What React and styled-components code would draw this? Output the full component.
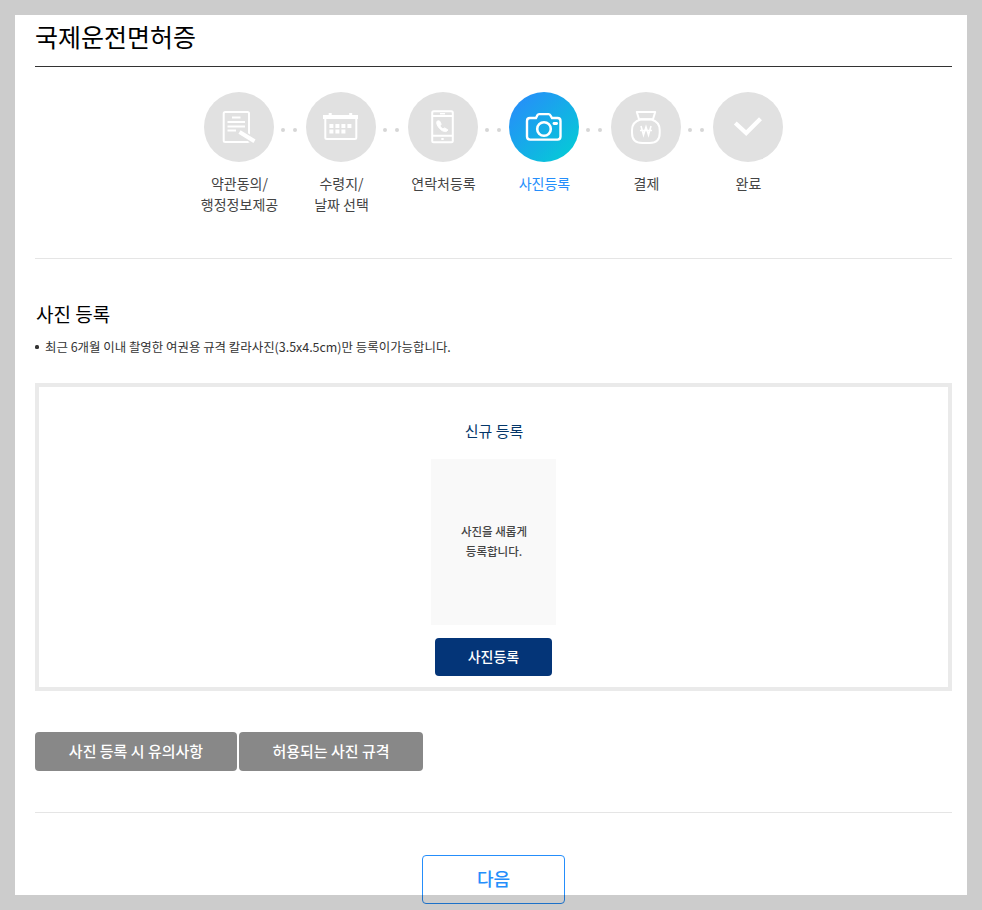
import React from "react";
import styled, { createGlobalStyle } from "styled-components";

const Global = createGlobalStyle`
  * { box-sizing: border-box; }
  html, body { margin: 0; padding: 0; background: #fff; height: 910px; overflow: hidden; }
  body, button { font-family: "Noto Sans CJK KR", "Noto Sans", sans-serif; }
  h1, h2, h3, p, ul, ol { margin: 0; padding: 0; font-weight: 400; list-style: none; }
`;

const Page = styled.main`
  position: relative;
  width: 982px;
  height: 910px;
  padding: 15px 30px 0 35px;
  overflow: hidden;
  background: #fff;
`;

const Frame = styled.div`
  position: absolute;
  inset: 0;
  border: 15px solid rgba(0, 0, 0, 0.2);
  pointer-events: none;
`;

const Title = styled.h1`
  height: 52px;
  padding-top: 3px;
  border-bottom: 1px solid #333;
  color: #000;
  font-size: 25px;
  line-height: 36px;
`;

const Steps = styled.ol`
  display: flex;
  justify-content: center;
  height: 192px;
  padding-top: 25px;
  border-bottom: 1px solid #e5e5e5;
`;

const Step = styled.li`
  display: flex;
  flex-direction: column;
  align-items: center;
  width: 70px;
  color: ${(p) => (p.$active ? "#258efb" : "#444")};
`;

const Circle = styled.span`
  display: flex;
  width: 70px;
  height: 70px;
  border-radius: 50%;
  background: ${(p) => (p.$active ? "linear-gradient(135deg, #2590f8 12%, #06c8d8 88%)" : "#e1e1e1")};
`;

const StepLabel = styled.span`
  margin-top: 11px;
  padding-left: 1px;
  font-size: 14px;
  line-height: 21px;
  text-align: center;
  white-space: pre;
`;

const Dots = styled.li`
  display: flex;
  gap: 8px;
  width: ${(p) => p.$width}px;
  padding: 36px 0 0 7px;

  &::before,
  &::after {
    content: "";
    width: 4px;
    height: 4px;
    border-radius: 50%;
    background: #d6d6d6;
  }
`;

const SectionTitle = styled.h2`
  margin-top: 41px;
  padding-left: 1px;
  color: #000;
  font-size: 19px;
  line-height: 28px;
`;

const Note = styled.p`
  display: flex;
  align-items: center;
  gap: 6px;
  margin: 9px 0 26px;
  color: #333;
  font-size: 12.45px;
  line-height: 20px;

  &::before {
    content: "";
    width: 4px;
    height: 4px;
    border-radius: 1.5px;
    background: #333;
  }
`;

const UploadBox = styled.section`
  display: flex;
  flex-direction: column;
  align-items: center;
  height: 308px;
  border: 4px solid #eaeaea;
`;

const UploadTitle = styled.h3`
  margin-top: 33px;
  padding-left: 1px;
  color: #043669;
  font-size: 15px;
  line-height: 22px;
`;

const PhotoArea = styled.p`
  display: flex;
  align-items: center;
  justify-content: center;
  width: 125px;
  height: 166px;
  margin: 17px 0 13px;
  padding: 0 0 2px 1px;
  background: #f9f9f9;
  color: #444;
  font-size: 11.5px;
  font-weight: 500;
  line-height: 20px;
  text-align: center;
  white-space: pre;
`;

const Button = styled.button`
  display: flex;
  align-items: center;
  justify-content: center;
  padding: 0 0 2px;
  border: 0;
  border-radius: 4px;
  color: #fff;
  font-weight: 500;
`;

const UploadButton = styled(Button)`
  width: 117px;
  height: 38px;
  background: #043578;
  font-size: 14px;
`;

const GuideButtons = styled.div`
  display: flex;
  gap: 2px;
  height: 122px;
  padding-top: 41px;
  border-bottom: 1px solid #e5e5e5;
`;

const GuideButton = styled(Button)`
  width: ${(p) => p.$width}px;
  height: 39px;
  background: #888;
  font-size: 15px;
`;

const NextButton = styled(Button)`
  width: 143px;
  height: 49px;
  margin: 42px auto 0;
  padding-bottom: 3px;
  border: 1px solid #258efb;
  background: #fff;
  color: #258efb;
  font-size: 18px;
`;

const Icon = styled.svg`
  width: 70px;
  height: 70px;
  fill: none;
  stroke: #fff;
  stroke-width: ${(p) => p.$stroke || 2}px;
`;

const DocumentIcon = () => (
  <Icon viewBox="0 0 70 70">
    <rect x="19.7" y="20" width="25.3" height="30" rx="1.5" />
    <path d="M28 25.5h8.5M23.5 30H41M23.5 34.5H41M23.5 38.5h8.5" />
    <path d="M39 42l13 8.5" stroke="#e1e1e1" strokeWidth="6.5" />
    <path d="M35.5 40l15 9.3" strokeWidth="4" />
  </Icon>
);

const CalendarIcon = () => (
  <Icon viewBox="0 0 70 70">
    <rect x="19.3" y="24" width="31" height="23" rx="1.5" />
    <path d="M17 25h35" strokeWidth="4" />
    <path d="M24.2 21v5M44.7 21v5" strokeWidth="3" />
    <path d="M23.4 34h22M23.4 39.4h16" strokeWidth="4" strokeDasharray="4 2" />
  </Icon>
);

const PhoneIcon = () => (
  <Icon viewBox="0 0 70 70">
    <rect x="24.2" y="19.2" width="20.6" height="31" rx="1.5" />
    <path d="M24 24h21M24 43.8h21" />
    <path d="M32 21.7h5" strokeWidth="1.4" />
    <path d="M33.3 47h2.4" strokeWidth="2" />
    <path d="M29.6 28.8c-1.8 1.2-.7 4.6 1.8 7.5s6 4.2 7.6 2.7l.9-1.1-3.2-2-1.7 1c-1.3-.5-2.5-1.8-2.9-3.1l1.1-1.6-1.6-3.2z" fill="#fff" strokeWidth="1" />
  </Icon>
);

const CameraIcon = () => (
  <Icon viewBox="0 0 70 70" $stroke={2.4}>
    <path d="M21 26h6l1.5-3q.5-.9 1.6-.9h9.5q1.1 0 1.6.9L43 26h5.5q3 0 3 3v15.6q0 3-3 3H21q-3 0-3-3V29q0-3 3-3z" />
    <circle cx="35" cy="37" r="6.8" strokeWidth="2.6" />
    <path d="M45 31.5h2.6" strokeWidth="2.8" strokeLinecap="round" />
  </Icon>
);

const MoneyBagIcon = () => (
  <Icon viewBox="0 0 70 70">
    <path d="M25.8 20h18.4l-2.2 7.2H28z" strokeLinejoin="round" />
    <path d="M29.5 27.5h11q8.2 2.5 8.2 10.5v3q0 10-10 10h-7.4q-10.3 0-10.3-10v-3q0-8 8.5-10.5z" />
    <path d="M30 34l2.5 9 2.5-8 2.5 8 2.5-9M29 38.5h12" strokeWidth="1.6" />
  </Icon>
);

const CheckIcon = () => (
  <Icon viewBox="0 0 70 70">
    <path d="M22.3 31l10.9 10L47.5 26.7" strokeWidth="4.2" />
  </Icon>
);

const STEPS = [
  { label: "약관동의/\n행정정보제공", icon: DocumentIcon, gap: 32 },
  { label: "수령지/\n날짜 선택", icon: CalendarIcon, gap: 32 },
  { label: "연락처등록", icon: PhoneIcon, gap: 31 },
  { label: "사진등록", icon: CameraIcon, gap: 32, active: true },
  { label: "결제", icon: MoneyBagIcon, gap: 32 },
  { label: "완료", icon: CheckIcon },
];

export default function App() {
  return (
    <>
      <Global />
      <Page>
        <Title>국제운전면허증</Title>
        <Steps>
          {STEPS.map(({ label, icon: StepIcon, gap, active }) => (
            <React.Fragment key={label}>
              <Step $active={active}>
                <Circle $active={active}>
                  <StepIcon />
                </Circle>
                <StepLabel>{label}</StepLabel>
              </Step>
              {gap && <Dots $width={gap} />}
            </React.Fragment>
          ))}
        </Steps>
        <SectionTitle>사진 등록</SectionTitle>
        <Note>최근 6개월 이내 촬영한 여권용 규격 칼라사진(3.5x4.5cm)만 등록이가능합니다.</Note>
        <UploadBox>
          <UploadTitle>신규 등록</UploadTitle>
          <PhotoArea>{"사진을 새롭게\n등록합니다."}</PhotoArea>
          <UploadButton>사진등록</UploadButton>
        </UploadBox>
        <GuideButtons>
          <GuideButton $width={202}>사진 등록 시 유의사항</GuideButton>
          <GuideButton $width={184}>허용되는 사진 규격</GuideButton>
        </GuideButtons>
        <NextButton>다음</NextButton>
        <Frame />
      </Page>
    </>
  );
}
